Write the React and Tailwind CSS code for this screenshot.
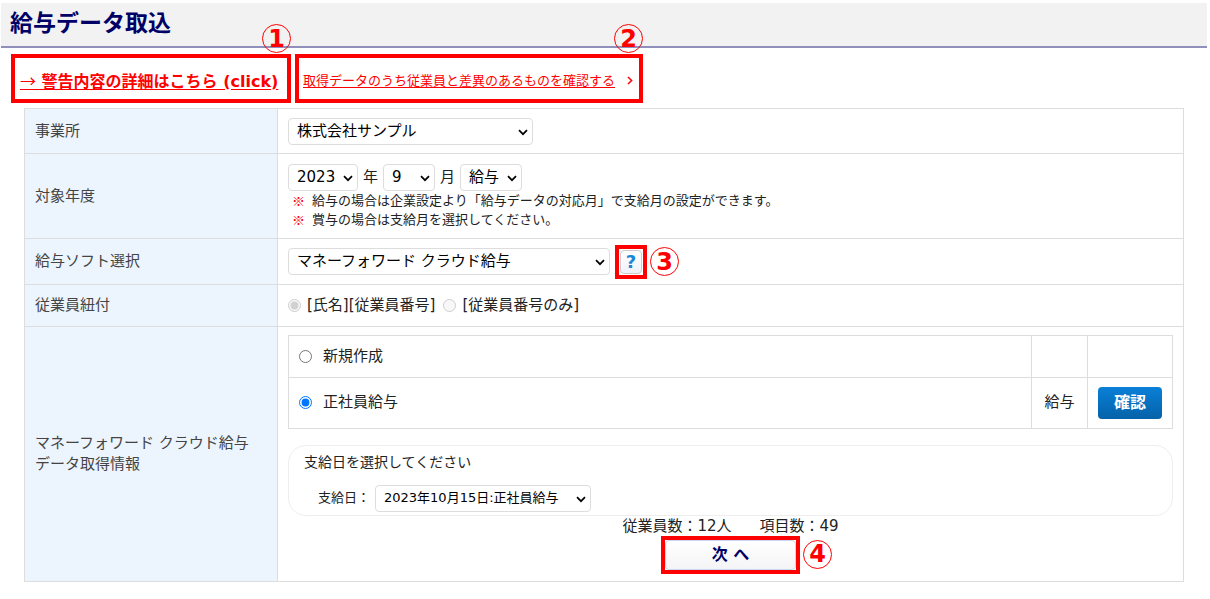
import React, { useState } from 'react';

const Marker = ({ children, className = '' }) => (
  <span
    className={`flex h-[29px] w-[29px] shrink-0 items-center justify-center rounded-full border border-[#ff0000] text-2xl leading-none font-bold text-[#ff0000] ${className}`}
  >
    {children}
  </span>
);

const Select = ({ label, options, className = '' }) => (
  <span className={`relative inline-block ${className}`}>
    <select
      aria-label={label}
      className="block h-[27px] w-full appearance-none rounded border border-[#dddddd] bg-white pr-5 pl-2 text-black"
    >
      {options.map((option) => (
        <option key={option}>{option}</option>
      ))}
    </select>
    <svg
      viewBox="0 0 10 7"
      className="pointer-events-none absolute top-[11px] right-[5px] h-[7px] w-[10px]"
      fill="none"
      stroke="#000"
      strokeWidth="1.7"
    >
      <path d="M1 1.2 5 5.2 9 1.2" />
    </svg>
  </span>
);

const Row = ({ title, height, children }) => (
  <tr className={height}>
    <th
      scope="row"
      className="w-[253px] border border-[#dddddd] bg-[#ecf4fd] pr-5 pl-[10px] text-left align-middle leading-[21px] font-normal text-[#444444]"
    >
      {title}
    </th>
    <td className="border border-[#dddddd] px-[10px] align-middle">{children}</td>
  </tr>
);

const notes = [
  '給与の場合は企業設定より「給与データの対応月」で支給月の設定ができます。',
  '賞与の場合は支給月を選択してください。',
];

const App = () => {
  const [template, setTemplate] = useState('regular');

  return (
    <div className="bg-white pt-[3px] font-['DejaVu_Sans','Noto_Sans_CJK_JP',sans-serif] text-[15px] text-[#222222]">
      <header className="mr-[3px] ml-px flex h-[45px] items-center border-b-2 border-[#9190bd] bg-[#f2f2f2] px-[9px] pb-1">
        <h1 className="text-[23px] leading-8 font-bold text-[#000066]">給与データ取込</h1>
      </header>

      <nav className="mt-[6px] ml-[11px] flex gap-1 text-[#ff0000]">
        <div className="relative flex h-[49px] w-[280px] items-center border-4 border-[#ff0000] px-[5px] pt-1">
          <a href="#warning" className="text-base font-bold whitespace-nowrap underline underline-offset-2">
            <span className="font-['Noto_Sans_CJK_JP',sans-serif] font-normal">→</span> 警告内容の詳細はこちら (click)
          </a>
          <Marker className="absolute -top-[34px] -right-1">1</Marker>
        </div>
        <div className="relative flex h-[49px] w-[348px] items-center border-4 border-[#ff0000] px-1 pt-1">
          <a href="#diff" className="flex items-center text-[13px] whitespace-nowrap">
            <span className="underline underline-offset-2">取得データのうち従業員と差異のあるものを確認する</span>
            <svg viewBox="0 0 6 9" className="ml-3 h-[9px] w-[6px]" fill="none" stroke="#f00" strokeWidth="1.5">
              <path d="M1 1 4.6 4.5 1 8" />
            </svg>
          </a>
          <Marker className="absolute -top-[34px] -right-1">2</Marker>
        </div>
      </nav>

      <main className="mt-[5px] mr-[26px] ml-6">
        <table className="w-full table-fixed border-collapse">
          <tbody>
            <Row title="事業所" height="h-[45px]">
              <Select label="事業所" options={['株式会社サンプル']} className="w-[245px] align-middle" />
            </Row>

            <Row title="対象年度" height="h-[85px]">
              <div className="flex items-center">
                <Select label="年" options={['2023', '2022']} className="w-[70px]" />
                <span className="mx-[5px]">年</span>
                <Select label="月" options={['9', '10']} className="w-[52px]" />
                <span className="mx-[5px]">月</span>
                <Select label="種別" options={['給与', '賞与']} className="w-[62px]" />
              </div>
              <ul className="ml-1 text-[13px] leading-[19px]">
                {notes.map((note) => (
                  <li key={note} className="flex gap-[7px]">
                    <span className="font-['Noto_Sans_CJK_JP',sans-serif] font-bold text-[#ff0000]">※</span>
                    {note}
                  </li>
                ))}
              </ul>
            </Row>

            <Row title="給与ソフト選択" height="h-[46px]">
              <div className="flex items-center">
                <Select label="給与ソフト選択" options={['マネーフォワード クラウド給与']} className="w-[322px]" />
                <div className="mr-[3px] ml-[5px] border-4 border-[#ff0000] p-px">
                  <button
                    type="button"
                    aria-label="ヘルプ"
                    className="flex h-6 w-[22px] items-center justify-center rounded border border-[#cccccc] bg-linear-to-b from-white to-[#f0f2fa] text-lg leading-none font-bold text-[#1b87d6]"
                  >
                    ?
                  </button>
                </div>
                <Marker>3</Marker>
              </div>
            </Row>

            <Row title="従業員紐付" height="h-[42px]">
              <div className="flex items-center">
                <label className="flex items-center gap-[6px]">
                  <input type="radio" name="link" defaultChecked disabled className="h-[13px] w-[13px]" />
                  [氏名][従業員番号]
                </label>
                <label className="ml-2 flex items-center gap-[6px]">
                  <input type="radio" name="link" disabled className="h-[13px] w-[13px]" />
                  [従業員番号のみ]
                </label>
              </div>
            </Row>

            <Row title="マネーフォワード クラウド給与データ取得情報" height="h-[255px]">
              <table className="w-full table-fixed border-collapse">
                <tbody>
                  <tr className="h-[42px]">
                    <td className="border border-[#dddddd] px-[10px]">
                      <label className="flex items-center gap-[11px]">
                        <input
                          type="radio"
                          name="template"
                          checked={template === 'new'}
                          onChange={() => setTemplate('new')}
                          className="h-[13px] w-[13px]"
                        />
                        新規作成
                      </label>
                    </td>
                    <td className="w-14 border border-[#dddddd]" />
                    <td className="w-[85px] border border-[#dddddd]" />
                  </tr>
                  <tr className="h-[51px]">
                    <td className="border border-[#dddddd] px-[10px]">
                      <label className="flex items-center gap-[11px]">
                        <input
                          type="radio"
                          name="template"
                          checked={template === 'regular'}
                          onChange={() => setTemplate('regular')}
                          className="h-[13px] w-[13px]"
                        />
                        正社員給与
                      </label>
                    </td>
                    <td className="border border-[#dddddd] text-center">給与</td>
                    <td className="border border-[#dddddd] px-[10px]">
                      <button
                        type="button"
                        className="block h-8 w-full rounded bg-linear-to-b from-[#0a80d8] to-[#0562a8] text-base leading-none font-bold text-white"
                      >
                        確認
                      </button>
                    </td>
                  </tr>
                </tbody>
              </table>

              <div className="mt-4 h-[71px] rounded-[18px] border border-[#eeeeee] px-[15px] pt-[6px]">
                <p className="text-sm leading-5">支給日を選択してください</p>
                <div className="mt-[13px] ml-[14px] flex items-center text-[13px]">
                  支給日：
                  <Select label="支給日" options={['2023年10月15日:正社員給与']} className="ml-[5px] w-[216px]" />
                </div>
              </div>

              <p className="text-center leading-5">
                <span className="mr-7">従業員数：12人</span>
                <span>項目数：49</span>
              </p>
              <div className="relative mx-auto w-[139px] border-4 border-[#ff0000]">
                <button
                  type="button"
                  className="block h-[30px] w-full rounded border border-[#c9d6f0] bg-linear-to-b from-white to-[#f4f4f6] text-base leading-none font-bold text-[#000066]"
                >
                  次 へ
                </button>
                <Marker className="absolute top-0 left-[138px]">4</Marker>
              </div>
            </Row>
          </tbody>
        </table>
      </main>
    </div>
  );
};

export default App;
